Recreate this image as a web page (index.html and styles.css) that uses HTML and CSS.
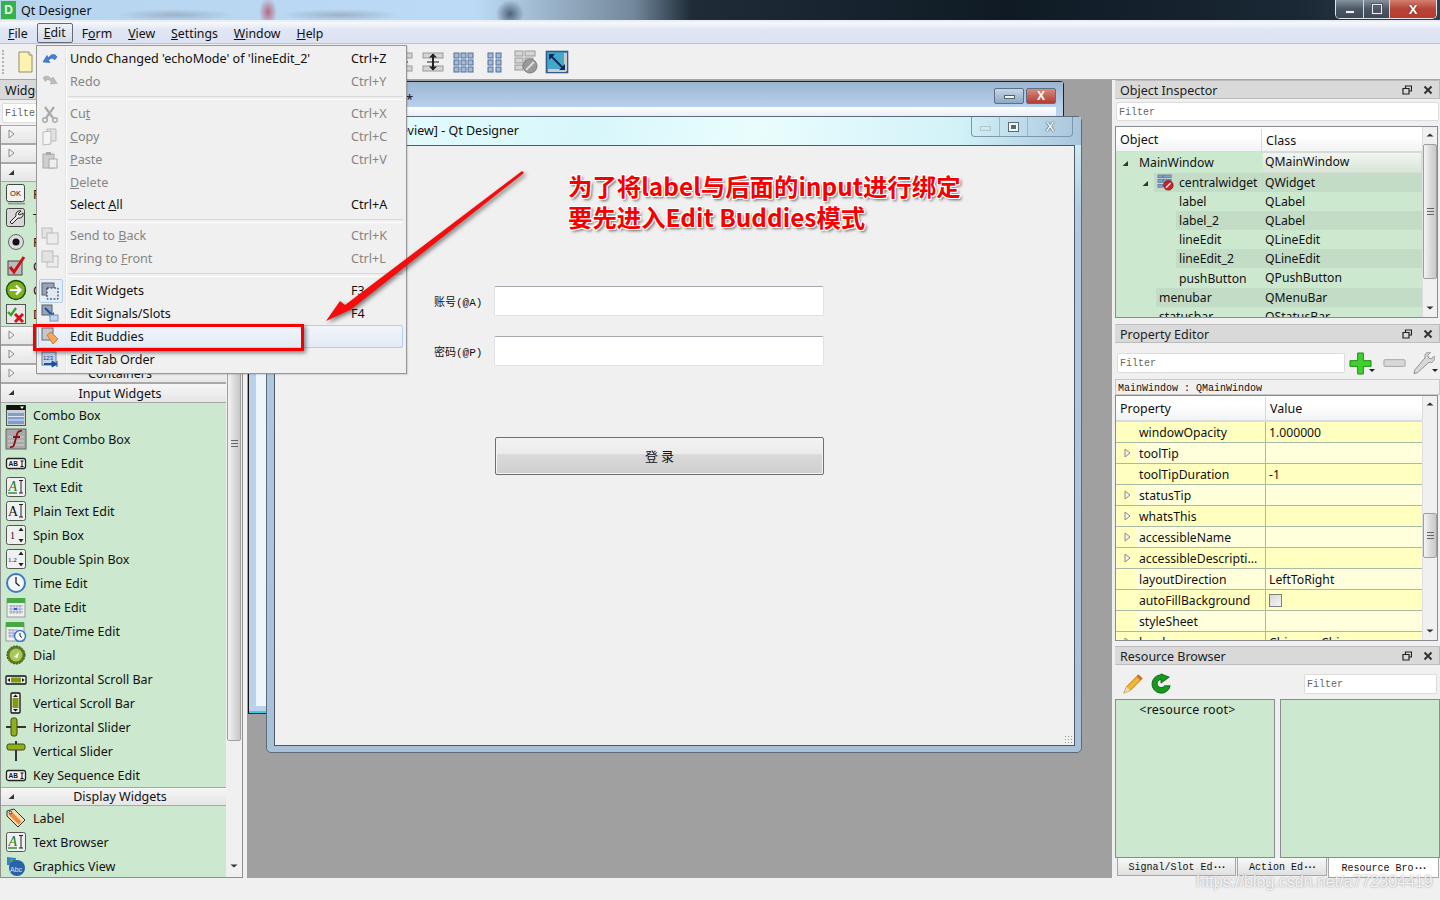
FILE: index.html
```html
<!DOCTYPE html>
<html lang="en">
<head>
<meta charset="utf-8">
<title>Qt Designer</title>
<link rel="stylesheet" href="styles.css">
</head>
<body>
<svg class="defs" width="0" height="0" aria-hidden="true">
  <defs>
    <symbol id="a-open" viewBox="0 0 10 10"><path d="M3 1l5 4-5 4z" fill="#f4f4f4" stroke="#8a8a8a"/></symbol>
    <symbol id="a-down" viewBox="0 0 10 10"><path d="M8 3v5H2.500z" fill="#333"/></symbol>
    <symbol id="s-up" viewBox="0 0 10 10"><path d="M1.500 6.500L5 3.500l3.500 3z" fill="#333"/></symbol>
    <symbol id="s-down" viewBox="0 0 10 10"><path d="M1.500 3.500L5 6.500l3.500-3z" fill="#333"/></symbol>
    <symbol id="i-float" viewBox="0 0 10 10"><path d="M3.500 3V1h6v5h-2.500M1 3.500h6v5.500H1zM1 3.500h6" fill="none" stroke="#222" stroke-width="1.200"/></symbol>
    <symbol id="i-close" viewBox="0 0 10 10"><path d="M1.500 1.500l7 7M8.500 1.500l-7 7" stroke="#333" stroke-width="2"/></symbol>

    <symbol id="i-ok" viewBox="0 0 22 22"><rect x="1.500" y="1.500" width="18" height="17" rx="2" fill="#f2f2f2" stroke="#444"/><path d="M3 20.500h17" stroke="#999" stroke-width="2"/><text x="10.500" y="13" font-family="Liberation Sans" font-size="7.500" text-anchor="middle" fill="#111">OK</text></symbol>
    <symbol id="i-tool" viewBox="0 0 22 22"><rect x="1.500" y="1.500" width="18" height="18" rx="2" fill="#d8d8d8" stroke="#444"/><path d="M16 4a4 4 0 0 0-5 5l-6 6 2 2 6-6a4 4 0 0 0 5-5l-3 2-2-1z" fill="#eee" stroke="#222"/></symbol>
    <symbol id="i-radio" viewBox="0 0 22 22"><circle cx="11" cy="11" r="7.500" fill="#dcdcdc" stroke="#666"/><circle cx="11" cy="11" r="3.500" fill="#111"/></symbol>
    <symbol id="i-check" viewBox="0 0 22 22"><rect x="3" y="6" width="14" height="14" fill="#bbb" stroke="#444"/><path d="M5 12l4 5L19 2" fill="none" stroke="#c8121c" stroke-width="3"/></symbol>
    <symbol id="i-link" viewBox="0 0 22 22"><circle cx="11" cy="11" r="9.500" fill="#7fb21f" stroke="#1d4a12" stroke-width="1.400"/><path d="M5 11h10M11 6.500l4.500 4.500-4.500 4.500" fill="none" stroke="#fff" stroke-width="2.200"/></symbol>
    <symbol id="i-dlg" viewBox="0 0 22 22"><rect x="1.500" y="1.500" width="19" height="19" fill="#e7e7e7" stroke="#555"/><path d="M3 9l3 3 5-7" fill="none" stroke="#2ea52a" stroke-width="2.400"/><path d="M10 11l8 8M18 11l-8 8" stroke="#d2141c" stroke-width="3"/></symbol>

    <symbol id="i-combo" viewBox="0 0 22 22"><rect x="1.500" y="1.500" width="19" height="20" fill="#cfcfcf" stroke="#555"/><rect x="1.500" y="1" width="19" height="5" fill="#111"/><path d="M15 2.500h4l-2 2.500z" fill="#fff"/><rect x="3" y="9" width="16" height="11" fill="#7c9fd2"/><path d="M3 12.500h16M3 16h16" stroke="#dfe8f5"/></symbol>
    <symbol id="i-font" viewBox="0 0 22 22"><rect x="1" y="1" width="20" height="20" fill="#a9a9a9" stroke="#666"/><path d="M3 9h16M3 13h16M3 17h16" stroke="#d0d0d0"/><path d="M17 3c-4-1-5 2-6 7l-2 7c-.6 2-2 2.500-4 2M8 9h7" fill="none" stroke="#8c0f12" stroke-width="1.800"/></symbol>
    <symbol id="i-line" viewBox="0 0 22 22"><rect x="1.500" y="6.500" width="19" height="10" rx="2" fill="#f4f4f4" stroke="#222" stroke-width="1.300"/><text x="3.500" y="14" font-family="Liberation Sans" font-weight="700" font-size="6.500" fill="#111">AB</text><path d="M15.500 9h3M15.500 14.500h3M17 9v5.500" stroke="#111"/></symbol>
    <symbol id="i-text" viewBox="0 0 22 22"><rect x="1.500" y="1.500" width="19" height="19" rx="2" fill="#f0f0f0" stroke="#555"/><text x="3.500" y="15" font-family="Liberation Serif" font-style="italic" font-size="14" fill="#1a7a2a">A</text><path d="M3 17h9" stroke="#1a7a2a" stroke-width="1.300"/><path d="M14 4.500h4M14 17h4M16 4.500V17" stroke="#222"/></symbol>
    <symbol id="i-plain" viewBox="0 0 22 22"><rect x="1.500" y="1.500" width="19" height="19" rx="2" fill="#f0f0f0" stroke="#555"/><text x="3" y="16" font-family="Liberation Serif" font-size="14" fill="#111">A</text><path d="M14 4.500h4M14 17h4M16 4.500V17" stroke="#222"/></symbol>
    <symbol id="i-spin" viewBox="0 0 22 22"><rect x="1.500" y="1.500" width="19" height="19" rx="2" fill="#f0f0f0" stroke="#555"/><text x="5" y="15" font-family="Liberation Serif" font-size="10" fill="#111">1</text><path d="M13.500 7L16 3.500 18.500 7zM13.500 15l2.500 3.500 2.500-3.500z" fill="#222"/></symbol>
    <symbol id="i-dspin" viewBox="0 0 22 22"><rect x="1.500" y="1.500" width="19" height="19" rx="2" fill="#f0f0f0" stroke="#555"/><text x="3" y="14" font-family="Liberation Serif" font-size="7" fill="#111">1.2</text><path d="M13.500 7L16 3.500 18.500 7zM13.500 15l2.500 3.500 2.500-3.500z" fill="#222"/></symbol>
    <symbol id="i-clock" viewBox="0 0 22 22"><circle cx="11" cy="11" r="9" fill="#f4f7fb" stroke="#3f78c4" stroke-width="2"/><path d="M11 5v6l3.500 3" fill="none" stroke="#222" stroke-width="1.300"/></symbol>
    <symbol id="i-date" viewBox="0 0 22 22"><rect x="2" y="3" width="18" height="18" fill="#f0f0f0" stroke="#999"/><rect x="2" y="2" width="18" height="5" fill="#45a845"/><path d="M4 10h14M4 13h14M4 16h14M6 9v9M9 9v9M12 9v9M15 9v9" stroke="#9aa3c4"/><rect x="9" y="12" width="3" height="2" fill="#2a62d0"/></symbol>
    <symbol id="i-datetime" viewBox="0 0 22 22"><rect x="1" y="3" width="18" height="18" fill="#f0f0f0" stroke="#999"/><rect x="1" y="2" width="18" height="5" fill="#45a845"/><path d="M3 10h10M3 13h8M3 16h7M5 9v9M8 9v9" stroke="#9aa3c4"/><circle cx="15" cy="16" r="5.500" fill="#f4f7fb" stroke="#3f78c4" stroke-width="1.500"/><path d="M15 13v3l2 1.500" fill="none" stroke="#222"/></symbol>
    <symbol id="i-dial" viewBox="0 0 22 22"><circle cx="11" cy="11" r="9" fill="#5a7a1c" stroke="#33470f" stroke-dasharray="2 1"/><circle cx="11" cy="11" r="6.500" fill="#a7c95a"/><path d="M9 13l5-5-1.500 6z" fill="#fff"/></symbol>
    <symbol id="i-hscroll" viewBox="0 0 22 22"><rect x="1" y="8" width="20" height="8" rx="1" fill="#eee" stroke="#111" stroke-width="1.300"/><rect x="6" y="9.500" width="10" height="5" fill="#7d9c10"/><path d="M5 10l-2.500 2L5 14zM17 10l2.500 2-2.500 2z" fill="#111"/></symbol>
    <symbol id="i-vscroll" viewBox="0 0 22 22"><rect x="6" y="1" width="9" height="20" rx="1" fill="#eee" stroke="#111" stroke-width="1.300"/><rect x="7.500" y="6" width="6" height="10" fill="#7d9c10"/><path d="M8 5l2.500-2.500L13 5zM8 17l2.500 2.500L13 17z" fill="#111"/></symbol>
    <symbol id="i-hslider" viewBox="0 0 22 22"><path d="M1 11h20" stroke="#333" stroke-width="2"/><rect x="6" y="2" width="6" height="18" rx="2" fill="#8fae22" stroke="#3d4d0e"/></symbol>
    <symbol id="i-vslider" viewBox="0 0 22 22"><path d="M11 1v20" stroke="#333" stroke-width="2"/><rect x="2" y="4" width="18" height="6" rx="2" fill="#8fae22" stroke="#3d4d0e"/></symbol>
    <symbol id="i-label" viewBox="0 0 22 22"><path d="M2 4l7-2 11 11-7 7L2 9z" fill="#f3dbb6" stroke="#333"/><path d="M5 6l10 10" stroke="#e98b3a" stroke-width="4"/><circle cx="5.500" cy="5.500" r="1.300" fill="#fff" stroke="#333"/></symbol>
    <symbol id="i-graphics" viewBox="0 0 22 22"><path d="M2 2l9 1-1 8-8-1z" fill="#3e7ed0"/><path d="M4 6l4-2 1 5z" fill="#4caf3a"/><circle cx="12" cy="13" r="8" fill="#2a62a8"/><text x="5" y="17" font-family="Liberation Sans" font-size="7" fill="#d9e6f7">Abc</text></symbol>

    <symbol id="m-undo" viewBox="0 0 18 18"><path d="M16 8c-2-4-7-3-8 1L6 6.500 2 13l7 .5-1.500-2c2-3 5-3 6-.5z" fill="#3f7fd8" stroke="#2a5fb0" stroke-width=".6"/></symbol>
    <symbol id="m-redo" viewBox="0 0 18 18"><path d="M2 6c2-3 7-2 8 1l2-2 4 6.500-7 .5 1.500-2c-2-3-5-3-6-.5z" fill="#bbb" stroke="#aaa" stroke-width=".6"/></symbol>
    <symbol id="m-cut" viewBox="0 0 18 18"><path d="M4 2l8 11M13 2L5 13" stroke="#aaa" stroke-width="2.200"/><circle cx="4" cy="15" r="2.300" fill="none" stroke="#aaa" stroke-width="1.500"/><circle cx="14" cy="15" r="2.300" fill="none" stroke="#aaa" stroke-width="1.500"/></symbol>
    <symbol id="m-copy" viewBox="0 0 18 18"><path d="M6 1h9v12H6z" fill="#e2e2e2" stroke="#bbb"/><path d="M2 4l8-1v13l-8 1z" fill="#f4f4f4" stroke="#bbb"/></symbol>
    <symbol id="m-paste" viewBox="0 0 18 18"><rect x="2" y="3" width="11" height="14" fill="#cfcfcf" stroke="#aaa"/><rect x="5" y="1" width="5" height="3" fill="#aaa"/><rect x="8" y="8" width="8" height="9" fill="#eee" stroke="#aaa"/></symbol>
    <symbol id="m-back" viewBox="0 0 18 18"><rect x="1" y="1" width="10" height="10" fill="#e2e2e2" stroke="#bbb"/><rect x="6" y="6" width="11" height="11" fill="#ececec" stroke="#bbb"/></symbol>
    <symbol id="m-front" viewBox="0 0 18 18"><rect x="6" y="6" width="11" height="11" fill="#ececec" stroke="#bbb"/><rect x="1" y="1" width="11" height="11" fill="#e2e2e2" stroke="#bbb"/></symbol>
    <symbol id="m-widgets" viewBox="0 0 18 18"><rect x="1" y="1" width="12" height="12" fill="#9aa4b4" stroke="#55606e"/><rect x="6" y="6" width="11" height="11" fill="#dfe9f7" stroke="#223" stroke-dasharray="2 1.500"/></symbol>
    <symbol id="m-signals" viewBox="0 0 18 18"><rect x="1" y="1" width="10" height="10" fill="#9aa4b4" stroke="#55606e"/><path d="M4 4l8 8" stroke="#1a4fa0" stroke-width="2"/><path d="M13 8v5H8z" fill="#1a4fa0"/><rect x="9" y="11" width="8" height="6" fill="#c2d5ee" stroke="#7a94ba"/></symbol>
    <symbol id="m-buddies" viewBox="0 0 18 18"><rect x="1" y="1" width="11" height="12" fill="#c3c8d0" stroke="#666"/><path d="M6 8l4-3 7 7-5 5z" fill="#f2a860" stroke="#d67c28"/></symbol>
    <symbol id="m-tab" viewBox="0 0 18 18"><rect x="1" y="1" width="14" height="13" fill="#c2d5ee" stroke="#6b7f9c"/><text x="2" y="9" font-family="Liberation Sans" font-size="6" fill="#1a3f80">123</text><path d="M3 13h9" stroke="#1a4fa0" stroke-width="2"/><path d="M11 10l5 3-5 3zM16 10v6" fill="#1a4fa0" stroke="#1a4fa0"/></symbol>

    <symbol id="t-new" viewBox="0 0 24 24"><path d="M6 2h10l3 3v17H6z" fill="#fdf3b0" stroke="#8f8f6a"/><path d="M16 2v3h3" fill="#fff" stroke="#8f8f6a"/></symbol>
    <symbol id="t-split" viewBox="0 0 24 24"><rect x="2" y="3" width="20" height="5" fill="#d5d5d5" stroke="#999"/><rect x="2" y="16" width="20" height="5" fill="#d5d5d5" stroke="#999"/><path d="M12 4v16" stroke="#222" stroke-width="2"/><path d="M8 7.500h8l-4-4zM8 16.500h8l-4 4z" fill="#222"/><path d="M6 12h12" stroke="#222"/></symbol>
    <symbol id="t-grid" viewBox="0 0 24 24"><g fill="#9dbce2" stroke="#566e92"><rect x="2" y="3" width="5" height="5"/><rect x="9" y="3" width="5" height="5"/><rect x="16" y="3" width="5" height="5"/><rect x="2" y="10" width="5" height="5"/><rect x="9" y="10" width="5" height="5"/><rect x="16" y="10" width="5" height="5"/><rect x="2" y="17" width="5" height="5"/><rect x="9" y="17" width="5" height="5"/><rect x="16" y="17" width="5" height="5"/></g></symbol>
    <symbol id="t-form" viewBox="0 0 24 24"><g fill="#9dbce2" stroke="#566e92"><rect x="5" y="3" width="5" height="5"/><rect x="13" y="3" width="5" height="5"/><rect x="5" y="10" width="5" height="5"/><rect x="13" y="10" width="5" height="5"/><rect x="5" y="17" width="5" height="5"/><rect x="13" y="17" width="5" height="5"/></g></symbol>
    <symbol id="t-break" viewBox="0 0 24 24"><g fill="#d5d5d5" stroke="#999"><rect x="1" y="1" width="8" height="5"/><rect x="11" y="1" width="10" height="5"/><rect x="1" y="8" width="8" height="5"/><rect x="11" y="8" width="8" height="5"/><rect x="1" y="15" width="8" height="5"/></g><circle cx="16" cy="16" r="7" fill="#999" stroke="#7d7d7d"/><path d="M12 20l8-8" stroke="#ddd" stroke-width="2"/></symbol>
    <symbol id="t-adjust" viewBox="0 0 24 24"><rect x="1.500" y="1.500" width="21" height="21" fill="#43a8c9" stroke="#345a90" stroke-width="1.600"/><rect x="19" y="3" width="3" height="18" fill="#ccc"/><rect x="3" y="19" width="18" height="3" fill="#ccc"/><path d="M5 5l13 13" stroke="#0d2a5c" stroke-width="2"/><path d="M4 4h6l-6 6zM20 20h-6l6-6z" fill="#0d2a5c"/></symbol>
    <symbol id="t-plus" viewBox="0 0 24 24"><path d="M9 1h6v8h8v6h-8v8H9v-8H1V9h8z" fill="#3ed12a" stroke="#1f8a16"/></symbol>
    <symbol id="t-minus" viewBox="0 0 24 24"><rect x="1" y="8" width="22" height="7" rx="1" fill="#d8d8d8" stroke="#a5a5a5"/></symbol>
    <symbol id="t-wrench" viewBox="0 0 24 24"><path d="M23 4l-3 3-3-1-1-3 3-3c-3-1-6 1-6 4v2L2 19l-1 4 4-1 12-11h2c3 0 5-3 4-7z" fill="#d8d8d8" stroke="#8a8a8a"/></symbol>
    <symbol id="t-pencil" viewBox="0 0 24 24"><path d="M2 22l3-7L18 2l4 4L9 19z" fill="#f2b733" stroke="#a87a18"/><path d="M18 2l4 4-2 2-4-4z" fill="#d9683a"/><path d="M2 22l3-7 4 4z" fill="#e8d9b8"/></symbol>
    <symbol id="t-reload" viewBox="0 0 24 24"><path d="M12 2a10 10 0 1 0 10 12h-6a4.500 4.500 0 1 1-4-7v4l9-6.500L12 1z" fill="#169a1e" stroke="#0e6414"/></symbol>
    <symbol id="i-cw" viewBox="0 0 18 18"><g fill="#7fa3cf" stroke="#4e6d96" stroke-width=".7"><rect x="1" y="1" width="5" height="3"/><rect x="7" y="1" width="8" height="3"/><rect x="1" y="6" width="5" height="3"/><rect x="7" y="6" width="8" height="3"/><rect x="1" y="11" width="5" height="3"/></g><circle cx="12" cy="12" r="5" fill="#c8242a" stroke="#8c1418"/><path d="M9.500 14.500l5-5" stroke="#fff" stroke-width="1.300"/></symbol>
  </defs>
</svg>

<div class="app">
  <header class="titlebar">
    <span class="app-logo">D</span>
    <span class="app-title">Qt Designer</span>
    <div class="wincaps">
      <span class="cap cap-min"><i></i></span>
      <span class="cap cap-max"><i></i></span>
      <span class="cap cap-close">X</span>
    </div>
  </header>

  <nav class="menubar">
    <span class="mb"><u>F</u>ile</span>
    <span class="mb mb-on"><u>E</u>dit</span>
    <span class="mb">F<u>o</u>rm</span>
    <span class="mb"><u>V</u>iew</span>
    <span class="mb"><u>S</u>ettings</span>
    <span class="mb"><u>W</u>indow</span>
    <span class="mb"><u>H</u>elp</span>
  </nav>

  <div class="toolbar">
    <span class="handle"></span>
    <svg class="tb-ic"><use href="#t-new"/></svg>
    <span class="tb-gap"></span>
    <svg class="tb-ic"><use href="#t-split"/></svg>
    <svg class="tb-ic"><use href="#t-split"/></svg>
    <svg class="tb-ic"><use href="#t-grid"/></svg>
    <svg class="tb-ic"><use href="#t-form"/></svg>
    <svg class="tb-ic"><use href="#t-break"/></svg>
    <svg class="tb-ic"><use href="#t-adjust"/></svg>
  </div>

  <main class="workspace">
    <aside class="leftdock">
      <div class="left-title">Widget Box</div>
      <div class="filter left-filter">Filter</div>
      <div class="left-body">
        <div class="wlist">
          <div class="cat"><svg class="arrow"><use href="#a-open"/></svg><span>Layouts</span></div>
          <div class="cat"><svg class="arrow"><use href="#a-open"/></svg><span>Spacers</span></div>
          <div class="cat"><svg class="arrow"><use href="#a-down"/></svg><span>Buttons</span></div>
          <div class="wi"><svg class="wi-ic"><use href="#i-ok"/></svg>Push Button</div>
          <div class="wi"><svg class="wi-ic"><use href="#i-tool"/></svg>Tool Button</div>
          <div class="wi"><svg class="wi-ic"><use href="#i-radio"/></svg>Radio Button</div>
          <div class="wi"><svg class="wi-ic"><use href="#i-check"/></svg>Check Box</div>
          <div class="wi"><svg class="wi-ic"><use href="#i-link"/></svg>Command Link Button</div>
          <div class="wi"><svg class="wi-ic"><use href="#i-dlg"/></svg>Dialog Button Box</div>
          <div class="cat"><svg class="arrow"><use href="#a-open"/></svg><span>Item Views</span></div>
          <div class="cat"><svg class="arrow"><use href="#a-open"/></svg><span>Item Widgets</span></div>
          <div class="cat"><svg class="arrow"><use href="#a-open"/></svg><span>Containers</span></div>
          <div class="cat cat-tall"><svg class="arrow"><use href="#a-down"/></svg><span>Input Widgets</span></div>
          <div class="wi"><svg class="wi-ic"><use href="#i-combo"/></svg>Combo Box</div>
          <div class="wi"><svg class="wi-ic"><use href="#i-font"/></svg>Font Combo Box</div>
          <div class="wi"><svg class="wi-ic"><use href="#i-line"/></svg>Line Edit</div>
          <div class="wi"><svg class="wi-ic"><use href="#i-text"/></svg>Text Edit</div>
          <div class="wi"><svg class="wi-ic"><use href="#i-plain"/></svg>Plain Text Edit</div>
          <div class="wi"><svg class="wi-ic"><use href="#i-spin"/></svg>Spin Box</div>
          <div class="wi"><svg class="wi-ic"><use href="#i-dspin"/></svg>Double Spin Box</div>
          <div class="wi"><svg class="wi-ic"><use href="#i-clock"/></svg>Time Edit</div>
          <div class="wi"><svg class="wi-ic"><use href="#i-date"/></svg>Date Edit</div>
          <div class="wi"><svg class="wi-ic"><use href="#i-datetime"/></svg>Date/Time Edit</div>
          <div class="wi"><svg class="wi-ic"><use href="#i-dial"/></svg>Dial</div>
          <div class="wi"><svg class="wi-ic"><use href="#i-hscroll"/></svg>Horizontal Scroll Bar</div>
          <div class="wi"><svg class="wi-ic"><use href="#i-vscroll"/></svg>Vertical Scroll Bar</div>
          <div class="wi"><svg class="wi-ic"><use href="#i-hslider"/></svg>Horizontal Slider</div>
          <div class="wi"><svg class="wi-ic"><use href="#i-vslider"/></svg>Vertical Slider</div>
          <div class="wi"><svg class="wi-ic"><use href="#i-line"/></svg>Key Sequence Edit</div>
          <div class="cat"><svg class="arrow"><use href="#a-down"/></svg><span>Display Widgets</span></div>
          <div class="wi"><svg class="wi-ic"><use href="#i-label"/></svg>Label</div>
          <div class="wi"><svg class="wi-ic"><use href="#i-text"/></svg>Text Browser</div>
          <div class="wi"><svg class="wi-ic"><use href="#i-graphics"/></svg>Graphics View</div>
        </div>
        <div class="sbar sbar-left">
          <div class="sb-thumb sb-thumb-left"><span class="grip"></span></div>
          <svg class="sb-arrow"><use href="#s-down"/></svg>
        </div>
      </div>
    </aside>

    <section class="mdi">
      <div class="win win-back">
        <div class="win-back-title">
          <span class="star">*</span>
          <span class="bcap bcap-min"><i></i></span>
          <span class="bcap bcap-close">X</span>
        </div>
        <div class="win-back-menu"></div>
        <div class="win-back-foot"></div>
      </div>
      <div class="win win-front">
        <div class="front-title">
          <span class="front-text">MainWindow - [Preview] - Qt Designer</span>
          <div class="fcaps">
            <span class="fcap fcap-min"><i></i></span>
            <span class="fcap fcap-max"><i></i></span>
            <span class="fcap fcap-close">X</span>
          </div>
        </div>
        <div class="form">
          <div class="frow"><span class="flabel">账号(@A)</span><span class="fedit"></span></div>
          <div class="frow"><span class="flabel">密码(@P)</span><span class="fedit"></span></div>
          <div class="fbtn">登 录</div>
          <span class="grip-corner"></span>
        </div>
      </div>
    </section>

    <aside class="rightdock">
      <div class="dtitle"><span>Object Inspector</span><svg class="d-ic"><use href="#i-float"/></svg><svg class="d-ic"><use href="#i-close"/></svg></div>
      <div class="filter oi-filter">Filter</div>
      <div class="tree oi-tree">
        <div class="tree-main">
          <div class="thead"><span class="th th-obj">Object</span><span class="th">Class</span></div>
          <div class="orow orow-first"><div class="oname o-sel"><svg class="arrow o-ar0"><use href="#a-down"/></svg>MainWindow</div><div class="oclass o-sel-r">QMainWindow</div></div>
          <div class="orow alt"><div class="oname o-l1"><svg class="arrow o-ar1"><use href="#a-down"/></svg><span class="o-ibg"><svg class="o-ic"><use href="#i-cw"/></svg>centralwidget</span></div><div class="oclass">QWidget</div></div>
          <div class="orow"><div class="oname o-l2">label</div><div class="oclass">QLabel</div></div>
          <div class="orow alt"><div class="oname o-l2">label_2</div><div class="oclass">QLabel</div></div>
          <div class="orow"><div class="oname o-l2">lineEdit</div><div class="oclass">QLineEdit</div></div>
          <div class="orow alt"><div class="oname o-l2">lineEdit_2</div><div class="oclass">QLineEdit</div></div>
          <div class="orow"><div class="oname o-l2">pushButton</div><div class="oclass">QPushButton</div></div>
          <div class="orow alt"><div class="oname o-l1b">menubar</div><div class="oclass">QMenuBar</div></div>
          <div class="orow"><div class="oname o-l1b">statusbar</div><div class="oclass">QStatusBar</div></div>
        </div>
        <div class="sbar">
          <svg class="sb-arrow"><use href="#s-up"/></svg>
          <div class="sb-thumb sb-thumb-oi"><span class="grip"></span></div>
          <svg class="sb-arrow sb-end"><use href="#s-down"/></svg>
        </div>
      </div>

      <div class="dtitle pe-title"><span>Property Editor</span><svg class="d-ic"><use href="#i-float"/></svg><svg class="d-ic"><use href="#i-close"/></svg></div>
      <div class="pe-tools">
        <div class="filter pe-filter">Filter</div>
        <svg class="pe-ic"><use href="#t-plus"/></svg><span class="mini"></span>
        <svg class="pe-ic pe-minus"><use href="#t-minus"/></svg>
        <svg class="pe-ic pe-wrench"><use href="#t-wrench"/></svg><span class="mini"></span>
      </div>
      <div class="pe-class">MainWindow : QMainWindow</div>
      <div class="tree pe-tree">
        <div class="tree-main">
          <div class="thead pe-head"><span class="th th-prop">Property</span><span class="th">Value</span></div>
          <div class="prow dark"><div class="pname">windowOpacity</div><div class="pval">1.000000</div></div>
          <div class="prow"><div class="pname"><svg class="arrow p-ar"><use href="#a-open"/></svg>toolTip</div><div class="pval"></div></div>
          <div class="prow dark"><div class="pname">toolTipDuration</div><div class="pval">-1</div></div>
          <div class="prow"><div class="pname"><svg class="arrow p-ar"><use href="#a-open"/></svg>statusTip</div><div class="pval"></div></div>
          <div class="prow dark"><div class="pname"><svg class="arrow p-ar"><use href="#a-open"/></svg>whatsThis</div><div class="pval"></div></div>
          <div class="prow"><div class="pname"><svg class="arrow p-ar"><use href="#a-open"/></svg>accessibleName</div><div class="pval"></div></div>
          <div class="prow dark"><div class="pname"><svg class="arrow p-ar"><use href="#a-open"/></svg>accessibleDescripti...</div><div class="pval"></div></div>
          <div class="prow"><div class="pname">layoutDirection</div><div class="pval">LeftToRight</div></div>
          <div class="prow dark"><div class="pname">autoFillBackground</div><div class="pval"><span class="cbox"></span></div></div>
          <div class="prow"><div class="pname">styleSheet</div><div class="pval"></div></div>
          <div class="prow dark"><div class="pname"><svg class="arrow p-ar"><use href="#a-open"/></svg>locale</div><div class="pval">Chinese, China</div></div>
        </div>
        <div class="sbar">
          <svg class="sb-arrow"><use href="#s-up"/></svg>
          <div class="sb-thumb sb-thumb-pe"><span class="grip"></span></div>
          <svg class="sb-arrow sb-end"><use href="#s-down"/></svg>
        </div>
      </div>

      <div class="dtitle rb-title"><span>Resource Browser</span><svg class="d-ic"><use href="#i-float"/></svg><svg class="d-ic"><use href="#i-close"/></svg></div>
      <div class="rb-tools">
        <svg class="rb-ic"><use href="#t-pencil"/></svg>
        <svg class="rb-ic"><use href="#t-reload"/></svg>
        <div class="filter rb-filter">Filter</div>
      </div>
      <div class="rb-panes">
        <div class="pane pane-l">&lt;resource root&gt;</div>
        <div class="pane pane-r"></div>
      </div>
      <div class="tabs">
        <span class="tab tab-1">Signal/Slot Ed<span class="dots">···</span></span>
        <span class="tab tab-2">Action Ed<span class="dots">···</span></span>
        <span class="tab tab-3">Resource Bro<span class="dots">···</span></span>
      </div>
    </aside>
  </main>

  <footer class="statusbar"></footer>

  <div class="menu">
    <div class="mi"><svg class="mi-ic"><use href="#m-undo"/></svg><span class="mi-t">Undo Changed 'echoMode' of 'lineEdit_2'</span><span class="mi-k">Ctrl+Z</span></div>
    <div class="mi dis"><svg class="mi-ic"><use href="#m-redo"/></svg><span class="mi-t">Redo</span><span class="mi-k">Ctrl+Y</span></div>
    <div class="msep msep-a"></div>
    <div class="mi dis"><svg class="mi-ic"><use href="#m-cut"/></svg><span class="mi-t">Cu<u>t</u></span><span class="mi-k">Ctrl+X</span></div>
    <div class="mi dis"><svg class="mi-ic"><use href="#m-copy"/></svg><span class="mi-t"><u>C</u>opy</span><span class="mi-k">Ctrl+C</span></div>
    <div class="mi dis"><svg class="mi-ic"><use href="#m-paste"/></svg><span class="mi-t"><u>P</u>aste</span><span class="mi-k">Ctrl+V</span></div>
    <div class="mi dis"><span class="mi-ic"></span><span class="mi-t"><u>D</u>elete</span><span class="mi-k"></span></div>
    <div class="mi mi-sel"><span class="mi-ic"></span><span class="mi-t">Select <u>A</u>ll</span><span class="mi-k">Ctrl+A</span></div>
    <div class="msep"></div>
    <div class="mi dis"><svg class="mi-ic"><use href="#m-back"/></svg><span class="mi-t">Send to <u>B</u>ack</span><span class="mi-k">Ctrl+K</span></div>
    <div class="mi dis"><svg class="mi-ic"><use href="#m-front"/></svg><span class="mi-t">Bring to <u>F</u>ront</span><span class="mi-k">Ctrl+L</span></div>
    <div class="msep"></div>
    <div class="mi mi-checked"><svg class="mi-ic"><use href="#m-widgets"/></svg><span class="mi-t">Edit Widgets</span><span class="mi-k">F3</span></div>
    <div class="mi"><svg class="mi-ic"><use href="#m-signals"/></svg><span class="mi-t">Edit Signals/Slots</span><span class="mi-k">F4</span></div>
    <div class="mi mi-hover"><svg class="mi-ic"><use href="#m-buddies"/></svg><span class="mi-t">Edit Buddies</span><span class="mi-k"></span></div>
    <div class="mi mi-last"><svg class="mi-ic"><use href="#m-tab"/></svg><span class="mi-t">Edit Tab Order</span><span class="mi-k"></span></div>
  </div>

  <span class="redbox"></span>
  <svg class="redarrow" viewBox="0 0 1440 900"><polygon points="326,321 340,301 345,305 522,171 524,173 349,311 352,309" fill="#f50d0d"/></svg>
  <div class="note">为了将label与后面的input进行绑定<br>要先进入Edit Buddies模式</div>
  <div class="watermark">https://blog.csdn.net/a772304419</div>
</div>
</body>
</html>
```

FILE: styles.css
```css
* { box-sizing: border-box; }
html, body { margin: 0; padding: 0; }
body { font-family: "Noto Sans", "Noto Sans CJK SC", sans-serif; font-size: 12.5px; color: #111; background: #f0f0f0; }
.defs { position: absolute; }

.app { position: relative; width: 1440px; height: 900px; overflow: hidden; display: flex; flex-direction: column; background: #f0f0f0; }

/* title bar */
.titlebar {
  height: 22px; flex: none; display: flex; align-items: center; padding-left: 1px;
  border-bottom: 2px solid #e8eef4;
  background:
    radial-gradient(ellipse 9px 14px at 268px 12px, #b56a80 0, rgba(181,106,128,0) 100%),
    radial-gradient(ellipse 14px 14px at 510px 14px, #4d6277 0, rgba(77,98,119,0) 100%),
    radial-gradient(ellipse 60px 6px at 175px 15px, #9bb3c9 0, rgba(155,179,201,0) 100%),
    radial-gradient(ellipse 60px 6px at 340px 15px, #9bb3c9 0, rgba(155,179,201,0) 100%),
    linear-gradient(90deg, #b8d5ee 0, #bcdaf6 33%, #a9c4dc 36%, #8ea5ba 40%, #73889d 44%, #1f2c38 48%, #0f1a24 70%, #1a2835 90%, #31414e 100%);
}
.app-logo { width: 15px; height: 18px; background: #35b34a; color: #eafbe8; font: 700 12px/18px "Liberation Sans", sans-serif; text-align: center; }
.app-title { margin-left: 5px; font-size: 12.500px; color: #101010; }
.wincaps { margin-left: auto; margin-right: 3px; align-self: flex-start; display: flex; height: 19px; border: 1px solid #dfe6ec; border-top: 0; border-radius: 0 0 5px 5px; overflow: hidden; }
.cap { display: flex; align-items: center; justify-content: center; background: linear-gradient(#8794a0, #4a5864 50%, #3d4a55); border-right: 1px solid #cfd6dc; color: #fff; }
.cap-min { width: 28px; }
.cap-min i { width: 10px; height: 4px; margin-top: 5px; background: #e9eef2; border: 1px solid #556; }
.cap-max { width: 26px; }
.cap-max i { width: 10px; height: 10px; border: 1px solid #e9eef2; box-shadow: inset 0 0 0 1px #556, 0 0 0 1px #556; }
.cap-close { width: 46px; border-right: 0; background: linear-gradient(#d2806f, #b6443a 50%, #bc3a2c); font: 700 13px "Liberation Sans", sans-serif; text-shadow: 0 0 2px #523; }

/* menu bar */
.menubar { height: 22px; flex: none; display: flex; align-items: center; background: linear-gradient(#f8f9fc, #dfe5f3 40%, #dde3f2); border-bottom: 1px solid #b9c2d4; font-size: 12.300px; }
.mb { padding: 1px 8px 0; height: 20px; line-height: 20px; }
.mb-on { margin: 0 1px; border: 1px solid #616b7c; border-radius: 2px; line-height: 18px; padding: 0 6px; background: linear-gradient(#eef1f7, #d4dbe9); }

/* toolbar */
.toolbar { height: 36px; flex: none; display: flex; align-items: center; gap: 7px; padding-left: 2px; background: #f0f0f0; border-bottom: 1px solid #a6a6a6; }
.handle { width: 3px; height: 24px; border-left: 2px dotted #b5b5b5; margin-right: 1px; }
.tb-ic { width: 24px; height: 24px; flex: none; }
.tb-gap { width: 339px; flex: none; }

/* workspace */
.workspace { height: 798px; flex: none; display: flex; }

/* left dock */
.leftdock { width: 247px; flex: none; display: flex; flex-direction: column; background: #f0f0f0; }
.left-title { height: 20px; padding-left: 5px; line-height: 21px; background: #d9d9d9; border-bottom: 1px solid #b0b0b0; }
.filter { font: 10px/19px "Liberation Mono", monospace; color: #666; background: #fff; border: 1px solid #dcdcdc; border-radius: 2px; padding-left: 2px; }
.left-filter { height: 20px; margin: 3px 10px 2px 2px; }
.left-body { flex: 1; display: flex; min-height: 0; }
.wlist { width: 226px; flex: none; background: #cce8cf; border-left: 1px solid #8f8f8f; border-bottom: 1px solid #8f8f8f; }
.cat { position: relative; height: 19px; line-height: 18px; padding-left: 13px; text-align: center; background: linear-gradient(#f6f6f6, #e6e6e6); border-top: 1px solid #a8a8a8; border-bottom: 1px solid #a8a8a8; }
.cat-tall { height: 20px; line-height: 19px; }
.arrow { width: 10px; height: 10px; flex: none; }
.cat .arrow { position: absolute; left: 5px; top: 3px; }
.wi { height: 24px; display: flex; align-items: center; gap: 6px; padding-left: 4px; white-space: nowrap; }
.wi-ic { width: 22px; height: 22px; flex: none; }

/* scrollbars */
.sbar { width: 15px; flex: none; display: flex; flex-direction: column; align-items: center; background: #f0f0f0; border-left: 1px solid #dedede; position: relative; overflow: hidden; }
.sbar-left { width: 17px; border-right: 1px solid #8f8f8f; border-bottom: 1px solid #8f8f8f; border-left: 0; }
.sb-arrow { width: 10px; height: 10px; flex: none; margin: 3px 0; }
.sb-end { position: absolute; bottom: 1px; }
.sbar-left .sb-arrow { position: absolute; bottom: 3px; }
.sb-thumb { width: 14px; flex: none; display: flex; align-items: center; justify-content: center; background: linear-gradient(90deg, #f3f3f3, #dcdcdc 50%, #c8c8c8); border: 1px solid #9f9f9f; border-radius: 2px; }
.sb-thumb-left { height: 596px; margin-top: 20px; }
.sb-thumb-oi { height: 135px; margin-top: 1px; }
.sb-thumb-pe { height: 45px; margin-top: 101px; }
.grip { width: 7px; height: 7px; border-top: 1px solid #666; border-bottom: 1px solid #666; position: relative; }
.grip::after { content: ""; position: absolute; left: 0; right: 0; top: 2px; height: 1px; background: #666; }

/* MDI */
.mdi { flex: 1; position: relative; background: #a0a0a0; width: 863px; }
.win { position: absolute; }
.win-back { left: 1px; top: 1px; width: 816px; height: 633px; border: 1px solid #1a2230; border-left-color: #111; border-radius: 4px 4px 0 0; background: #b9d1ea; padding: 0 7px 7px; display: flex; flex-direction: column; }
.win-back-title { height: 25px; flex: none; margin: 0 -7px; background: linear-gradient(#9bb5d2, #b8d1ec); position: relative; }
.star { position: absolute; left: 157px; top: 8px; font-size: 13px; }
.bcap { position: absolute; top: 6px; height: 16px; display: flex; align-items: center; justify-content: center; border: 1px solid #5b6f88; border-radius: 2px; }
.bcap-min { left: 745px; width: 30px; background: linear-gradient(#c7d6e6, #8ea9c6); }
.bcap-min i { width: 11px; height: 4px; background: #eef3f8; border: 1px solid #566; margin-top: 2px; }
.bcap-close { left: 777px; width: 30px; color: #fff; font: 700 12px "Liberation Sans", sans-serif; background: linear-gradient(#d88c80, #b33c33); }
.win-back-menu { flex: 1; background: linear-gradient(#fff, #e6ebf7 10px, #eef5fb 10px); }
.win-back-foot { position: absolute; left: 0; right: 0; bottom: 0; height: 2px; background: #35cde8; }

.win-front { left: 19px; top: 36px; width: 816px; height: 637px; border: 1px solid #5d6b78; border-radius: 5px; background: linear-gradient(#d9f8fb, #b2cbe2 15%, #a8c0d8); padding: 0 6px 6px 7px; display: flex; flex-direction: column; }
.front-title { height: 28px; flex: none; display: flex; margin: 0 -6px 0 -7px; padding-left: 30px; background: linear-gradient(100deg, #e9fdfd, #d8f7fb 40%, #eafdfd 60%, #d2f2f8 85%, #a8c4dc); position: relative; align-items: center; }
.front-text { white-space: nowrap; color: #101010; margin-bottom: 2px; }
.fcaps { position: absolute; right: 8px; top: 0; height: 20px; display: flex; border: 1px solid #7f97ad; border-top: 0; border-radius: 0 0 4px 4px; }
.fcap { display: flex; align-items: center; justify-content: center; border-right: 1px solid #9fb4c6; }
.fcap-min { width: 28px; }
.fcap-min i { width: 11px; height: 5px; border: 1px solid #b6c4cf; margin-top: 4px; }
.fcap-max { width: 28px; }
.fcap-max i { width: 11px; height: 10px; border: 1px solid #5b6873; box-shadow: inset 0 0 0 2px #e9fdfd, inset 0 0 0 4px #5b6873; }
.fcap-close { width: 44px; border-right: 0; color: #e9f6fa; font: 700 13px "Liberation Sans", sans-serif; text-shadow: 0 0 1px #333, 0 0 1px #333; }

.form { position: relative; flex: 1; background: #f0f0f0; border: 1px solid #4e5a68; padding: 140px 0 0 158px; display: flex; flex-direction: column; }
.frow { display: flex; align-items: center; height: 30px; margin-bottom: 20px; }
.flabel { width: 61px; flex: none; padding: 3px 0 0 1px; font: 11px/30px "Liberation Mono", "Noto Sans CJK SC", monospace; }
.fedit { width: 330px; height: 30px; background: #fff; border: 1px solid #e0e2e8; border-top-color: #a8a8b0; border-radius: 2px; }
.fbtn { margin: 51px 0 0 62px; width: 329px; height: 38px; text-align: center; font: 13px/36px "Noto Sans CJK SC", sans-serif; border: 1px solid #6e6e6e; border-radius: 2px; background: linear-gradient(#f2f2f2, #ebebeb 45%, #dadada 46%, #cfcfcf); box-shadow: inset 0 0 0 1px #f4f4f4; }
.grip-corner { position: absolute; right: 2px; bottom: 2px; width: 8px; height: 8px; background-image: radial-gradient(#999 0.8px, transparent 1px); background-size: 3px 3px; }

/* right dock */
.rightdock { width: 330px; flex: none; display: flex; flex-direction: column; padding-left: 3px; background: #f0f0f0; border-left: 2px solid #a0a0a0; }
.dtitle { height: 19px; flex: none; display: flex; align-items: center; gap: 11px; padding: 1px 6px 0 4px; background: #d9d9d9; border: 1px solid #bcbcbc; border-left-color: #d9d9d9; color: #1d1d1d; }
.dtitle span { margin-right: auto; }
.d-ic { width: 10px; height: 10px; flex: none; }
.oi-filter { height: 19px; margin: 3px 1px 0 1px; flex: none; }
.tree { display: flex; border: 1px solid #8a8c94; background: #cce8cf; flex: none; overflow: hidden; width: 323px; }
.oi-tree { height: 192px; margin-top: 5px; }
.tree-main { width: 306px; flex: none; overflow: hidden; }
.thead { height: 25px; display: flex; align-items: center; padding-top: 2px; background: linear-gradient(#fff, #fff 40%, #f2f3f5); border-bottom: 1px solid #d8dadf; }
.th { padding-left: 4px; }
.th-obj { width: 146px; padding-left: 4px; border-right: 1px solid #d8dadf; height: 100%; line-height: 22px; }
.orow { height: 19.100px; display: flex; align-items: center; font-size: 12.200px; white-space: nowrap; }
.orow-first { height: 21px; }
.oname { width: 147px; flex: none; height: 100%; display: flex; align-items: center; }
.oclass { flex: 1; height: 100%; line-height: 19px; padding-left: 2px; }
.o-sel { padding-left: 4px; }
.o-ar0 { margin-right: 9px; }
.o-sel-r { background: linear-gradient(#f2f5f1, #d7e5d6); border: 1px solid #d6dcd3; border-left: 0; border-radius: 0 2px 2px 0; line-height: 18px; }
.o-ar1 { margin: 0 4px 0 24px; }
.o-ibg { display: flex; align-items: center; gap: 5px; height: 100%; padding-left: 3px; flex: 1; }
.o-ic { width: 17px; height: 17px; flex: none; }
.o-l2 { padding-left: 63px; }
.o-l1b { padding-left: 43px; }
.alt .oclass, .alt .o-ibg { background: #c2dcc6; }
.alt .o-l2 { background: linear-gradient(90deg, transparent 60px, #c2dcc6 60px); }
.alt .o-l1b { background: linear-gradient(90deg, transparent 40px, #c2dcc6 40px); }

.pe-title { margin-top: 6px; }
.pe-tools { height: 22px; flex: none; margin-top: 9px; display: flex; align-items: center; padding-left: 2px; position: relative; }
.pe-filter { width: 228px; height: 20px; flex: none; }
.pe-ic { width: 23px; height: 23px; flex: none; margin-left: 4px; }
.pe-minus { margin-left: 8px; }
.pe-wrench { margin-left: 7px; width: 22px; }
.mini { width: 0; height: 0; margin-left: -3px; margin-top: 18px; border: 3px solid transparent; border-top: 3px solid #222; }
.pe-class { height: 16px; flex: none; margin: 5px 0 0 0; padding-left: 2px; background: #f0f0f0; border: 1px solid #c8c8c8; font: 10px/17px "Liberation Mono", monospace; color: #111; }
.pe-tree { height: 246px; }
.pe-head { margin-bottom: 1px; padding-top: 1px; }
.th-prop { width: 150px; border-right: 1px solid #d8dadf; height: 100%; line-height: 24px; }
.prow { height: 21px; display: flex; background: #ffffdc; border-bottom: 1px solid #a9bba5; font-size: 12.200px; white-space: nowrap; }
.prow.dark { background: #ffffbf; }
.pname { width: 150px; flex: none; display: flex; align-items: center; padding-left: 23px; position: relative; background: linear-gradient(90deg, #ffffbf 20px, transparent 20px); border-right: 1px solid #a9bba5; overflow: hidden; }
.p-ar { position: absolute; left: 6px; top: 5px; }
.pval { flex: 1; display: flex; align-items: center; padding-left: 3px; }
.cbox { width: 13px; height: 13px; border: 1px solid #7f7f7f; background: linear-gradient(135deg, #d8d8d8, #f4f4f4); }

.rb-title { margin-top: 5px; }
.rb-tools { height: 34px; flex: none; display: flex; align-items: center; gap: 6px; padding: 4px 0 0 7px; }
.rb-ic { width: 22px; height: 22px; flex: none; }
.rb-filter { width: 133px; height: 20px; margin-left: auto; margin-right: 3px; }
.rb-panes { height: 159px; flex: none; display: flex; gap: 5px; }
.pane { background: #cce8cf; border: 1px solid #8a8c94; }
.pane-l { width: 160px; text-align: center; line-height: 20px; padding-right: 15px; letter-spacing: .2px; }
.pane-r { width: 160px; }
.tabs { height: 20px; flex: none; display: flex; padding-left: 2px; align-items: flex-start; font: 10px "Liberation Mono", monospace; }
.tab { height: 18px; padding-top: 1px; line-height: 17px; text-align: center; background: linear-gradient(#f8f8f8, #e0e0e0); border: 1px solid #a8a8a8; border-top: 0; margin-right: 1px; }
.dots { letter-spacing: -2px; font-weight: 700; }
.tab-1 { width: 119px; }
.tab-2 { width: 90px; }
.tab-3 { width: 111px; height: 20px; padding-top: 2px; line-height: 18px; background: #fff; margin-right: 0; }

.statusbar { height: 22px; flex: none; background: #f0f0f0; }

/* Edit menu */
.menu {
  position: absolute; left: 36px; top: 45px; width: 371px; height: 329px; padding: 1px 3px 2px 1px;
  border: 1px solid #979797;
  background: linear-gradient(90deg, #f0f0f0 28px, #e3e3e3 28px, #e3e3e3 29px, #fff 29px, #fff 30px, #f0f0f0 30px);
  font-size: 12.600px; box-shadow: 1px 1px 1px rgba(0,0,0,.1);
}
.mi { height: 22.800px; display: flex; align-items: center; white-space: nowrap; position: relative; }
.mi-sel { margin-top: -1px; }
.mi-last { margin-top: .6px; }
.mi-ic { width: 18px; height: 18px; flex: none; margin: 0 11px 0 3px; position: relative; }
.mi-t { flex: 1; }
.mi-k { width: 52px; flex: none; }
.dis { color: #858585; }
.msep { height: 9px; margin-left: 30px; padding-top: 3px; }
.msep-a { height: 10px; }
.msep::before { content: ""; display: block; height: 2px; border-top: 1px solid #d8d8d8; border-bottom: 1px solid #fff; }
.mi-checked::before { content: ""; position: absolute; left: 1px; top: 0; width: 22px; height: 22px; border: 1px solid #b4cfee; border-radius: 2px; background: #e4eef9; }
.mi-hover { background: linear-gradient(#f2f5fa, #e2eaf5); border: 1px solid #b4cfee; border-radius: 2px; }
.mi-hover .mi-ic { margin-left: 2px; }

/* annotations */
.redbox { position: absolute; left: 33px; top: 324px; width: 271px; height: 27px; border: 3px solid #f40000; box-shadow: 2px 2px 4px rgba(0,0,0,.45); }
.redarrow { position: absolute; left: 0; top: 0; width: 1440px; height: 900px; pointer-events: none; filter: drop-shadow(2px 2px 2px rgba(0,0,0,.5)); }
.note {
  position: absolute; left: 568px; top: 170px; font: 700 24.400px/31px "Noto Sans CJK SC", sans-serif; color: #f40000; white-space: nowrap;
  text-shadow: 1px 0 0 #fff, -1px 0 0 #fff, 0 1px 0 #fff, 0 -1px 0 #fff, 1px 1px 0 #fff, -1px -1px 0 #fff, 1px -1px 0 #fff, -1px 1px 0 #fff, 2px 2px 3px rgba(0,0,0,.6);
}
.watermark { position: absolute; left: 1196px; top: 873px; font: 16px "Liberation Sans", sans-serif; color: rgba(255,255,255,.85); text-shadow: 0 0 2px rgba(120,120,120,.8); white-space: nowrap; }
```
